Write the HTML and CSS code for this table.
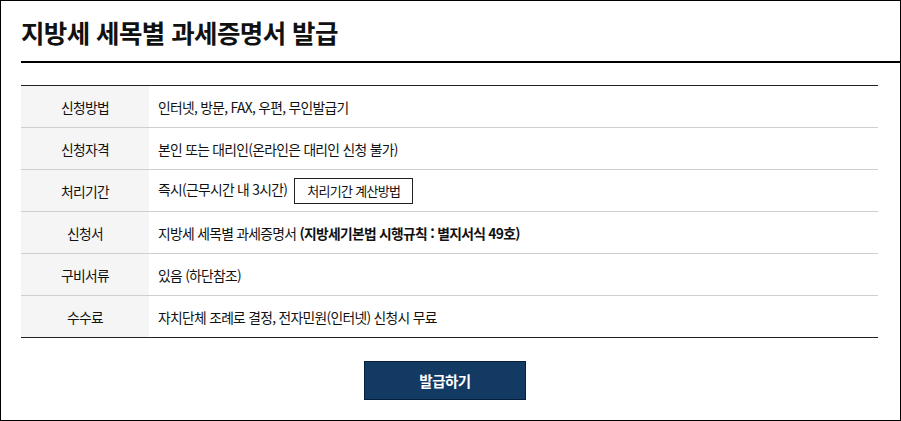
FILE: index.html
```html
<!DOCTYPE html>
<html lang="ko">
<head>
<meta charset="utf-8">
<link rel="stylesheet" href="styles.css">
</head>
<body>
<div class="frame">
  <h1 class="title">지방세 세목별 과세증명서 발급</h1>
  <div class="content">
    <table class="info">
      <tr><th>신청방법</th><td>인터넷, 방문, FAX, 우편, 무인발급기</td></tr>
      <tr><th>신청자격</th><td>본인 또는 대리인(온라인은 대리인 신청 불가)</td></tr>
      <tr><th>처리기간</th><td>즉시(근무시간 내 3시간)<span class="calc">처리기간 계산방법</span></td></tr>
      <tr><th>신청서</th><td>지방세 세목별 과세증명서 <b>(지방세기본법 시행규칙 : 별지서식 49호)</b></td></tr>
      <tr><th>구비서류</th><td>있음 (하단참조)</td></tr>
      <tr><th>수수료</th><td>자치단체 조례로 결정, 전자민원(인터넷) 신청시 무료</td></tr>
    </table>
    <div class="actions"><span class="issue">발급하기</span></div>
  </div>
</div>
</body>
</html>
```
FILE: styles.css
```css
html, body { margin: 0; padding: 0; background: #fff; }
body { font-family: "Noto Sans CJK KR", "Noto Sans", sans-serif; color: #111; }
.frame {
  width: 899px; height: 419px;
  border: 1px solid #000;
  box-sizing: content-box;
  overflow: hidden;
}
.title {
  margin: 0 0 0 20px;
  height: 60px;
  border-bottom: 2px solid #000;
  font-size: 25.5px;
  font-weight: 700;
  line-height: 62px;
  letter-spacing: -0.6px;
  color: #111;
}
.content { padding: 22px 22px 0 20px; }
.info {
  width: 857px;
  border-collapse: collapse;
  border-top: 1px solid #222;
  border-bottom: 1px solid #222;
  font-size: 13.8px;
  letter-spacing: -0.7px;
}
.info tr { height: 42px; border-bottom: 1px solid #cfcfcf; }
.info tr:last-child { border-bottom: 1px solid #222; }
.info th {
  width: 128px;
  background: #f5f5f5;
  font-weight: 400;
  text-align: center;
  padding: 0;
}
.info td { padding: 0 0 0 9px; }
.info b { font-weight: 700; }
.calc {
  display: inline-block;
  margin-left: 7px;
  border: 1px solid #222;
  padding: 0 12px;
  height: 24px;
  line-height: 23px;
  vertical-align: middle;
  font-size: 13px;
}
.actions { display: flex; justify-content: center; padding-top: 23px; padding-right: 9px; }
.issue {
  width: 160px; height: 37px;
  background: #123a63;
  border: 1px solid #061f3d;
  color: #fff;
  font-weight: 700;
  font-size: 14.5px;
  text-align: center;
  line-height: 37px;
  letter-spacing: -0.5px;
}
```
